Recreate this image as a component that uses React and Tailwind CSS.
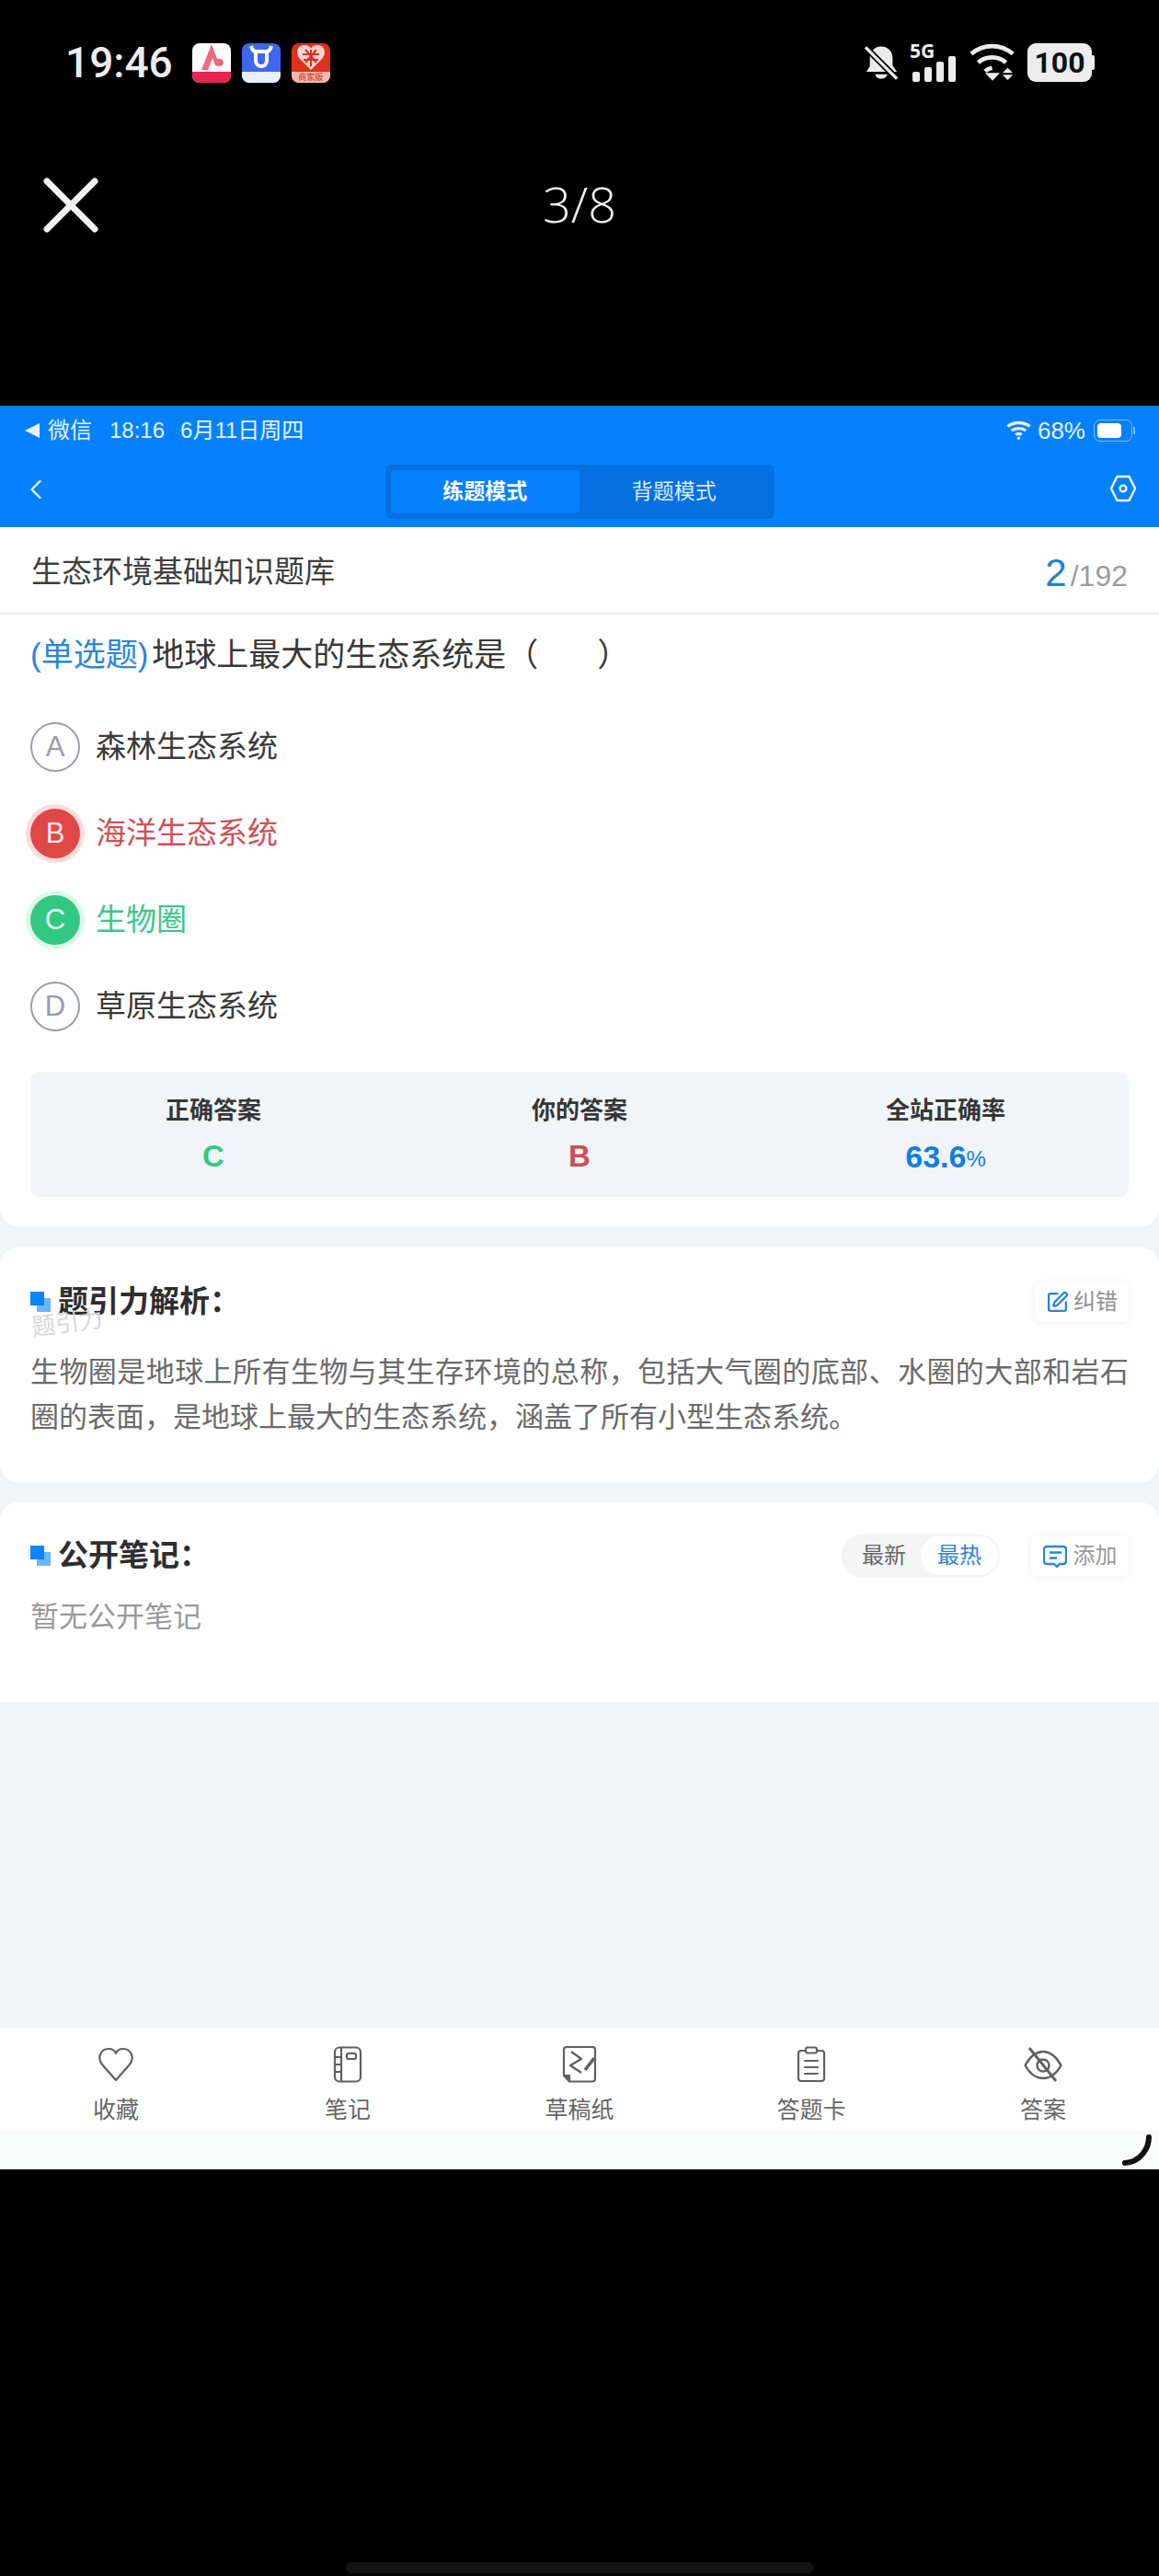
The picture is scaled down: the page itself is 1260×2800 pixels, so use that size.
import React from "react";
import { X, ChevronLeft, SquarePen } from "lucide-react";

const cjk = "font-['Liberation_Sans','Noto_Sans_CJK_SC',sans-serif]";

const options = [
  { key: "A", text: "森林生态系统", state: "none" },
  { key: "B", text: "海洋生态系统", state: "wrong" },
  { key: "C", text: "生物圈", state: "right" },
  { key: "D", text: "草原生态系统", state: "none" },
];

// small blue stacked squares in front of section titles
const TitleMark = () => (
  <span className="relative w-[22px] h-[22px] shrink-0 mr-[8px]">
    <span className="absolute left-[7px] top-[7px] w-[15px] h-[15px] bg-[#6cb6ff]" />
    <span className="absolute left-0 top-0 w-[15px] h-[15px] bg-[#0a84ff]" />
  </span>
);

const Option = ({ item }) => {
  let circle = "border-2 border-[#9a9cab] text-[#9a9cab]";
  let label = "text-[#3a3a3a]";
  if (item.state === "wrong") {
    circle = "bg-[#e04848] text-[#fde8e8] shadow-[0_0_0_5px_#fbdcdc]";
    label = "text-[#cf5057]";
  }
  if (item.state === "right") {
    circle = "bg-[#33c882] text-[#e8fbf2] shadow-[0_0_0_5px_#dcf7e9]";
    label = "text-[#3cc68a]";
  }
  return (
    <div className="flex items-center h-[54px] mb-[40px]">
      <span className={`w-[54px] h-[54px] rounded-full flex items-center justify-center text-[31px] ${circle}`}>
        {item.key}
      </span>
      <span className={`ml-[17px] text-[33px] ${label}`}>{item.text}</span>
    </div>
  );
};

const Stat = ({ title, children }) => (
  <div className="flex-1 flex flex-col items-center">
    <span className="text-[26px] font-bold text-[#363636] leading-[36px]">{title}</span>
    <div className="mt-[10px] h-[44px] flex items-center">{children}</div>
  </div>
);

const HeartIcon = () => (
  <svg width="40" height="40" viewBox="0 0 40 40" fill="none" stroke="#606060" strokeWidth="2.2" strokeLinejoin="round">
    <path d="M20 37L5 20C-1 12 4 3 12 3c4 0 7 2 8 5 1-3 4-5 8-5 8 0 13 9 7 17z" />
  </svg>
);

const NotebookIcon = () => (
  <svg width="32" height="40" viewBox="0 0 32 40" fill="none" stroke="#606060" strokeWidth="2.2">
    <rect x="2" y="1.500" width="28" height="37" rx="5" />
    <path d="M9 2v36M2 12h7M2 20h7M2 28h7" />
    <rect x="15" y="8" width="10" height="6" rx="2" />
  </svg>
);

const DraftIcon = () => (
  <svg width="38" height="40" viewBox="0 0 38 40" fill="none" stroke="#606060" strokeWidth="2.2" strokeLinejoin="round">
    <path d="M8 38.500H33a3 3 0 0 0 3-3V4a3 3 0 0 0-3-3H5a3 3 0 0 0-3 3v28z" />
    <path d="M2 32h6v6.500" fill="#606060" />
    <path d="M10 6l11 8-12 7 12 8" />
    <path d="M35 13L25 26" strokeWidth="3.600" />
  </svg>
);

const CardIcon = () => (
  <svg width="32" height="40" viewBox="0 0 32 40" fill="none" stroke="#606060" strokeWidth="2.2" strokeLinecap="round">
    <path d="M9 5H5a3 3 0 0 0-3 3v27a3 3 0 0 0 3 3h22a3 3 0 0 0 3-3V8a3 3 0 0 0-3-3h-4" />
    <rect x="10" y="1.500" width="12" height="6" rx="2" />
    <path d="M9 16h14M9 23h14M9 30h14" />
  </svg>
);

const EyeSlashIcon = () => (
  <svg width="42" height="40" viewBox="0 0 42 40" fill="none" stroke="#606060" strokeWidth="2.4" strokeLinejoin="round">
    <path d="M1.500 21C7 11 14 6 21 6s14 5 19.500 15C35 31 28 35 21 35S7 31 1.500 21z" />
    <circle cx="21" cy="21" r="6.500" />
    <path d="M6 2l29 36" strokeWidth="2.8" />
  </svg>
);

const Tab = ({ icon, label }) => (
  <div className="flex-1 flex flex-col items-center">
    <div className="h-[40px] flex items-center justify-center">{icon}</div>
    <span className="mt-[11px] text-[25px] leading-[36px] text-[#666666]">{label}</span>
  </div>
);

const AppIcons = () => (
  <div className="flex items-center gap-[12px] ml-[21px]">
    <div className="w-[42px] h-[43px] rounded-[8px] bg-white overflow-hidden flex flex-col">
      <div className="flex-1 flex items-center justify-center">
        <svg width="30" height="30" viewBox="0 0 30 30">
          <path d="M15 1L4 29h7l5-13 3 8c4 2 9 1 9-3 0-3-3-5-7-4z" fill="#f2667c" />
        </svg>
      </div>
      <div className="h-[12px] bg-[#e8264f]" />
    </div>
    <div className="w-[42px] h-[43px] rounded-[8px] bg-[#3f66f0] overflow-hidden flex flex-col">
      <div className="flex-1 flex items-center justify-center">
        <svg width="26" height="28" viewBox="0 0 26 28" fill="none" stroke="#fff" strokeWidth="4">
          <path d="M7 7v11a6 6 0 0 0 12 0V7M2 2c1 4 3 6 5 6h12c2 0 4-2 5-6" />
        </svg>
      </div>
      <div className="h-[12px] bg-[#e8f0ff]" />
    </div>
    <div className="w-[42px] h-[43px] rounded-[8px] bg-[#e0301e] overflow-hidden flex flex-col">
      <div className="flex-1 flex items-center justify-center">
        <svg width="32" height="29" viewBox="0 0 32 29">
          <path d="M16 28L4 16C-2 9 2 1 9 1c3 0 6 1 7 4 1-3 4-4 7-4 7 0 11 8 5 15z" fill="#f8d5cc" />
          <path d="M16 6v18M7 11h18M8 17h16M10 6l12 14M22 6L10 20" stroke="#d8301e" strokeWidth="2" />
        </svg>
      </div>
      <div className="h-[12px] bg-[#f8b9ac] flex items-center justify-center text-[9px] leading-[12px] text-[#c8301e]">商家版</div>
    </div>
  </div>
);

const PhoneStatus = () => (
  <div className="flex items-center h-[42px] pl-[71px] pr-[73px] justify-between">
    <div className="flex items-center">
      <span className="text-[46px] font-medium font-['Roboto',sans-serif] leading-[42px] text-[#ececec]">19:46</span>
      <AppIcons />
    </div>
    <div className="flex items-center">
      {/* muted bell */}
      <svg width="38" height="41" viewBox="0 0 40 42" fill="#ececec">
        <path d="M20 2c8 0 13 6 13 13v9l5 7H3l4-6v-10C7 8 12 2 20 2zM13 34h14c-1 4-4 5-7 5s-6-1-7-5z" />
        <path d="M2 3l36 36" stroke="#000" strokeWidth="7" />
        <path d="M2 3l36 36" stroke="#ececec" strokeWidth="3.600" />
      </svg>
      <div className="relative w-[50px] h-[42px] ml-[12px]">
        <span className="absolute left-0 -top-[4px] text-[21px] font-bold leading-[24px] font-['Open_Sans',sans-serif] text-[#ececec]">5G</span>
        <div className="absolute left-[3px] bottom-0 flex items-end gap-[5px]">
          <span className="w-[8px] h-[11px] rounded-[2px] bg-[#ececec]" />
          <span className="w-[8px] h-[16px] rounded-[2px] bg-[#ececec]" />
          <span className="w-[8px] h-[22px] rounded-[2px] bg-[#ececec]" />
          <span className="w-[8px] h-[28px] rounded-[2px] bg-[#ececec]" />
        </div>
      </div>
      <svg className="ml-[14px]" width="51" height="42" viewBox="0 0 54 42" fill="none" stroke="#ececec" strokeWidth="5">
        <path d="M3 11c14-12 34-12 48 0M11 21c9-8 23-8 32 0" />
        <path d="M19 31c2-2 4-3 8-4" />
        <path d="M19 33h17l-8.500 9z" fill="#ececec" stroke="none" />
        <path d="M45 27l6 6H39zM39 35h12l-6 6z" fill="#ececec" stroke="none" />
      </svg>
      <div className="relative ml-[13px] w-[70px] h-[42px] rounded-[9px] bg-[#ececec] flex items-center justify-center text-[32px] font-bold font-['Roboto',sans-serif] text-[#111111]">
        100
        <span className="absolute -right-[3px] top-[13px] w-[3px] h-[16px] rounded-r-[2px] bg-[#ececec]" />
      </div>
    </div>
  </div>
);

export default function App() {
  return (
    <div className={`w-[1260px] h-[2800px] bg-black flex flex-col ${cjk}`}>
      <div className="h-[441px] shrink-0 flex flex-col pt-[47px]">
        <PhoneStatus />
        <div className="flex items-center justify-center relative mt-[102px] h-[60px]">
          <X className="absolute left-[25px] top-[-20px]" size={104} color="#f2f2f2" strokeWidth={1.6} />
          <span className="text-[54px] font-['Open_Sans',sans-serif] font-light text-[#f2f2f2]">3/8</span>
        </div>
      </div>

      <div className="h-[1917px] shrink-0 bg-[#f1f5f8] flex flex-col">
        {/* blue app header */}
        <div className="h-[132px] bg-[#0581fe] text-white shrink-0">
          <div className="h-[54px] flex items-center justify-between pl-[27px] pr-[29px] text-[#e6f2ff]">
            <div className="flex items-center text-[24px]">
              <span className="w-0 h-0 border-y-[8px] border-y-transparent border-r-[16px] border-r-[#e6f2ff] mr-[9px]" />
              <span>微信</span>
              <span className="ml-[19px]">18:16</span>
              <span className="ml-[17px]">6月11日周四</span>
            </div>
            <div className="flex items-center text-[26px]">
              <svg width="27" height="22" viewBox="0 0 24 20" fill="none" stroke="#e6f2ff" strokeWidth="3">
                <path d="M1 6c6-5 16-5 22 0M5 10c4-3 10-3 14 0M9 14c1.500-1 4.500-1 6 0" />
                <circle cx="12" cy="17.500" r="1.500" fill="#e6f2ff" stroke="none" />
              </svg>
              <span className="ml-[7px]">68%</span>
              <div className="relative ml-[9px] w-[42px] h-[24px] rounded-[7px] border border-[#7cc0ff] p-[3px] flex">
                <div className="w-[26px] rounded-[4px] bg-white" />
                <span className="absolute -right-[4px] top-[7px] w-[2px] h-[8px] bg-[#7cc0ff]" />
              </div>
            </div>
          </div>
          <div className="relative h-[78px] pt-[10px] flex items-start justify-center">
            <ChevronLeft className="absolute left-[21px] top-[19px]" size={36} strokeWidth={1.6} color="#e6f2ff" />
            <div className="flex w-[423px] h-[59px] rounded-[6px] bg-[#0670e0] p-[6px]">
              <div className="flex-1 rounded-[5px] bg-[#0581fe] flex items-center justify-center text-[23px] font-bold text-white">练题模式</div>
              <div className="flex-1 flex items-center justify-center text-[23px] text-[#dcecff]">背题模式</div>
            </div>
            <svg className="absolute right-[25px] top-[21px]" width="28" height="30" viewBox="0 0 30 32" fill="none" stroke="#f0f7ff" strokeWidth="2.6" strokeLinejoin="round">
              <path d="M8 2h14l7 14-7 14H8L1 16z" />
              <circle cx="15" cy="16" r="3.600" />
            </svg>
          </div>
        </div>

        {/* question card */}
        <div className="h-[760px] shrink-0 bg-white rounded-b-[20px]">
          <div className="h-[95px] pt-[5px] border-b-2 border-[#ececec] flex items-center justify-between px-[34px]">
            <span className="text-[33px] text-[#3e3e3e]">生态环境基础知识题库</span>
            <span className="flex items-baseline">
              <span className="text-[42px] text-[#1e80dc]">2</span>
              <span className="ml-[4px] text-[32px] text-[#9c9c9c]">/192</span>
            </span>
          </div>
          <div className="px-[33px] pt-[21px]">
            <div className="text-[35px] leading-[46px] text-[#383838] whitespace-pre">
              <span className="text-[#2a86dc] mr-[4px]">(单选题)</span>地球上最大的生态系统是（<span className="inline-block w-[64px]" />）
            </div>
            <div className="mt-[50px]">
              {options.map((item) => (
                <Option key={item.key} item={item} />
              ))}
            </div>
            {/* margin collapses with the last option's mb-[40px] */}
            <div className="mt-[44px] h-[136px] rounded-[10px] bg-[#f1f5f9] flex pt-[24px]">
              <Stat title="正确答案">
                <span className="text-[33px] font-bold text-[#36c883]">C</span>
              </Stat>
              <Stat title="你的答案">
                <span className="text-[33px] font-bold text-[#cf4d52]">B</span>
              </Stat>
              <Stat title="全站正确率">
                <span className="text-[34px] font-bold text-[#0f7fe6]">63.6</span>
                <span className="text-[24px] text-[#0f7fe6] mt-[5px]">%</span>
              </Stat>
            </div>
          </div>
        </div>

        {/* explanation */}
        <div className="mt-[23px] h-[255px] shrink-0 bg-white rounded-[20px] px-[33px] pt-[37px] relative">
          <div className="flex items-center justify-between h-[44px]">
            <div className="flex items-center">
              <TitleMark />
              <span className="text-[33px] font-bold text-[#2e2e2e]">题引力解析：</span>
            </div>
            <div className="flex items-center h-[43px] w-[102px] justify-center rounded-[6px] bg-white shadow-[0_1px_8px_rgba(0,0,0,0.08)]">
              <SquarePen size={25} color="#2a84d4" strokeWidth={2.2} />
              <span className="ml-[5px] text-[24px] text-[#919191]">纠错</span>
            </div>
          </div>
          <span className="absolute left-[34px] top-[67px] text-[26px] leading-[30px] text-[#d8d8d8] -rotate-[7deg]">题引力</span>
          <p className="mt-[30px] text-[31px] leading-[49px] text-justify text-[#6a6a6a]">
            生物圈是地球上所有生物与其生存环境的总称，包括大气圈的底部、水圈的大部和岩石圈的表面，是地球上最大的生态系统，涵盖了所有小型生态系统。
          </p>
        </div>

        {/* public notes */}
        <div className="mt-[22px] h-[217px] shrink-0 bg-white rounded-t-[20px] px-[33px] pt-[34px]">
          <div className="flex items-center justify-between h-[48px]">
            <div className="flex items-center">
              <TitleMark />
              <span className="text-[33px] font-bold text-[#2e2e2e]">公开笔记：</span>
            </div>
            <div className="flex items-center">
              <div className="flex items-center w-[172px] h-[48px] rounded-full bg-[#f5f5f5] p-[3px] pl-[22px] text-[24px]">
                <span className="shrink-0 whitespace-nowrap text-[#666666]">最新</span>
                <span className="ml-[16px] shrink-0 whitespace-nowrap h-full w-[84px] rounded-full bg-white flex items-center justify-center text-[#2a84d4]">最热</span>
              </div>
              <div className="ml-[34px] flex items-center justify-center w-[106px] h-[44px] rounded-[6px] bg-white shadow-[0_1px_8px_rgba(0,0,0,0.08)]">
                <svg width="26" height="25" viewBox="0 0 26 25" fill="none" stroke="#2a84d4" strokeWidth="2.400" strokeLinejoin="round">
                  <path d="M4 2h18a3 3 0 0 1 3 3v13a3 3 0 0 1-3 3h-4l-3 3-3-3H4a3 3 0 0 1-3-3V5a3 3 0 0 1 3-3z" />
                  <path d="M7 8.500h13M7 14.500h8" />
                </svg>
                <span className="ml-[7px] text-[24px] text-[#999999]">添加</span>
              </div>
            </div>
          </div>
          <div className="mt-[21px] text-[31px] leading-[44px] text-[#999999]">暂无公开笔记</div>
        </div>

        <div className="flex-1" />

        {/* bottom tabs */}
        <div className="h-[111px] shrink-0 bg-white flex pt-[20px]">
          <Tab icon={<HeartIcon />} label="收藏" />
          <Tab icon={<NotebookIcon />} label="笔记" />
          <Tab icon={<DraftIcon />} label="草稿纸" />
          <Tab icon={<CardIcon />} label="答题卡" />
          <Tab icon={<EyeSlashIcon />} label="答案" />
        </div>
        <div className="h-[43px] shrink-0 bg-[#f9fafa] relative">
          <svg className="absolute right-[6px] top-[5px]" width="36" height="36" viewBox="0 0 36 36" fill="none" stroke="#111" strokeWidth="6" strokeLinecap="round">
            <path d="M31 3C31 15 22 30 5 31" />
          </svg>
        </div>
      </div>

      <div className="flex-1 flex flex-col justify-end items-center pb-[3px]">
        <div className="w-[508px] h-[12px] rounded-full bg-[#131313]" />
      </div>
    </div>
  );
}
